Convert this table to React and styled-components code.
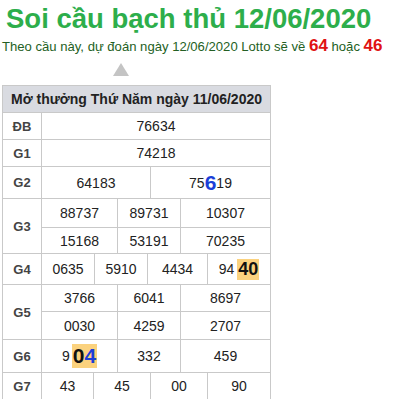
import React from 'react';
import styled, { createGlobalStyle } from 'styled-components';

const GlobalStyle = createGlobalStyle`
  body {
    margin: 0;
    background: #fff;
    font-family: "Liberation Sans", Arial, sans-serif;
  }
`;

const Page = styled.div`
  width: 393px;
  height: 399px;
  overflow: hidden;
  padding: 0 0 0 2px;
  box-sizing: border-box;
`;

const Title = styled.h1`
  margin: 0;
  padding: 3px 0 0 4px;
  font-size: 27.5px;
  line-height: 32px;
  font-weight: bold;
  color: #2dae4b;
  white-space: nowrap;
`;

const Subtitle = styled.div`
  font-size: 13.1px;
  line-height: 21px;
  color: #245f24;
  white-space: nowrap;
`;

const Hot = styled.b`
  color: #e01212;
  font-size: 17px;
`;

const Arrow = styled.div`
  width: 0;
  height: 0;
  margin: 6px 0 9px 111px;
  border-left: 8px solid transparent;
  border-right: 8px solid transparent;
  border-bottom: 13px solid #c4c4c4;
`;

const Table = styled.div`
  width: 269px;
  border-top: 1px solid #c9c9c9;
  border-left: 1px solid #c9c9c9;
  box-sizing: border-box;
`;

const Header = styled.div`
  height: 27px;
  display: flex;
  align-items: center;
  justify-content: center;
  background: #d9dbe1;
  border-right: 1px solid #c9c9c9;
  border-bottom: 1px solid #c9c9c9;
  box-sizing: border-box;
  font-size: 14px;
  font-weight: bold;
  color: #222;
  white-space: nowrap;
`;

const Group = styled.div`
  display: grid;
  grid-template-columns: 39px 229px;
  height: ${(p) => p.$h}px;
`;

const Label = styled.div`
  display: flex;
  align-items: center;
  justify-content: center;
  border-right: 1px solid #c9c9c9;
  border-bottom: 1px solid #c9c9c9;
  font-size: 13px;
  font-weight: bold;
  color: #444;
`;

const Lines = styled.div`
  display: flex;
  flex-direction: column;
`;

const Line = styled.div`
  display: grid;
  grid-template-columns: ${(p) => p.$cols};
  height: ${(p) => p.$h}px;
`;

const Cell = styled.div`
  display: flex;
  align-items: center;
  justify-content: center;
  border-right: 1px solid #c9c9c9;
  border-bottom: 1px solid #c9c9c9;
  box-sizing: border-box;
  font-size: 14px;
  color: #222;
`;

const Blue = styled.b`
  color: #1b3fd8;
  font-size: ${(p) => (p.$inline ? 'inherit' : '21px')};
`;

const Mark = styled.b`
  display: inline-flex;
  align-items: center;
  justify-content: center;
  background: #fbd27e;
  color: #111;
  font-size: ${(p) => (p.$big ? '21px' : '18px')};
  height: ${(p) => (p.$big ? '24px' : '21px')};
  padding: 0 1px;
  margin-left: ${(p) => (p.$big ? '2px' : '3px')};
`;

const G3 = '76px 63px 90px';

const rows = [
  { label: 'ĐB', h: 27, lines: [{ cols: '229px', cells: ['76634'] }] },
  { label: 'G1', h: 27, lines: [{ cols: '229px', cells: ['74218'] }] },
  { label: 'G2', h: 32, lines: [{ cols: '109px 120px', cells: ['64183', <>75<Blue>6</Blue>19</>] }] },
  {
    label: 'G3',
    h: 55,
    lines: [
      { cols: G3, h: 29, cells: ['88737', '89731', '10307'] },
      { cols: G3, h: 26, cells: ['15168', '53191', '70235'] },
    ],
  },
  {
    label: 'G4',
    h: 31,
    lines: [{ cols: '53px 53px 60px 63px', cells: ['0635', '5910', '4434', <>94<Mark>40</Mark></>] }],
  },
  {
    label: 'G5',
    h: 55,
    lines: [
      { cols: G3, h: 27, cells: ['3766', '6041', '8697'] },
      { cols: G3, h: 28, cells: ['0030', '4259', '2707'] },
    ],
  },
  {
    label: 'G6',
    h: 33,
    lines: [{ cols: G3, cells: [<>9<Mark $big>0<Blue $inline>4</Blue></Mark></>, '332', '459'] }],
  },
  { label: 'G7', h: 27, lines: [{ cols: '52px 57px 57px 63px', cells: ['43', '45', '00', '90'] }] },
];

export default function App() {
  return (
    <Page>
      <GlobalStyle />
      <Title>Soi cầu bạch thủ 12/06/2020</Title>
      <Subtitle>
        Theo cầu này, dự đoán ngày 12/06/2020 Lotto sẽ về <Hot>64</Hot> hoặc <Hot>46</Hot>
      </Subtitle>
      <Arrow />
      <Table>
        <Header>Mở thưởng Thứ Năm ngày 11/06/2020</Header>
        {rows.map((r) => (
          <Group key={r.label} $h={r.h}>
            <Label>{r.label}</Label>
            <Lines>
              {r.lines.map((l, i) => (
                <Line key={i} $cols={l.cols} $h={l.h || r.h}>
                  {l.cells.map((c, j) => (
                    <Cell key={j}>{c}</Cell>
                  ))}
                </Line>
              ))}
            </Lines>
          </Group>
        ))}
      </Table>
    </Page>
  );
}
